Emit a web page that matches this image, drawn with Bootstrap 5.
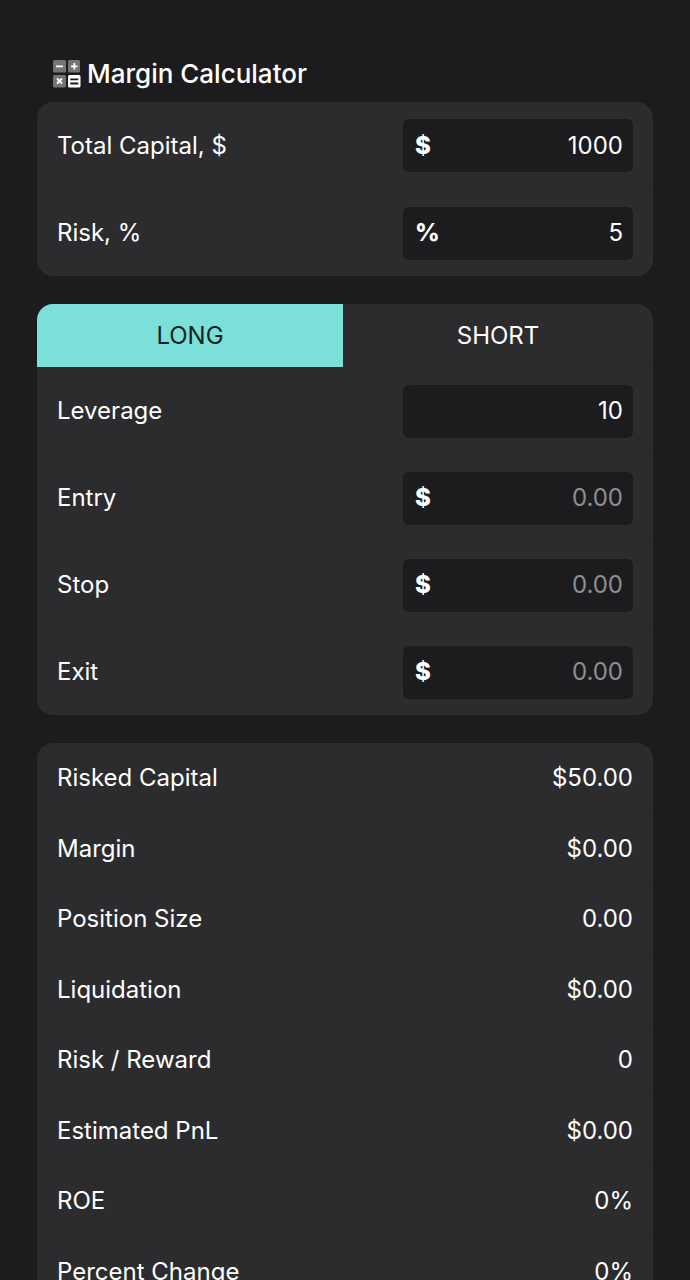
<!DOCTYPE html>
<html lang="en">
<head>
<meta charset="utf-8">
<meta name="viewport" content="width=device-width, initial-scale=1">
<title>Margin Calculator</title>
<link href="https://cdn.jsdelivr.net/npm/bootstrap@5.3.0/dist/css/bootstrap.min.css" rel="stylesheet">
<style>
  :root { --page: #1c1c1e; --panel: #2c2c2e; --line: #28282a; --accent: #7be0d9; }
  body { background: var(--page); color: #fff; font-family: Inter, "Liberation Sans", sans-serif; font-size: 24px; line-height: 32px; }
  .calc { padding: 58px 37px 37px; }
  .calc-title { font-size: 26px; line-height: 32px; font-weight: 500; margin: 0 0 12px; padding-left: 16px; gap: 6px; }
  .panel { background: var(--panel); border-radius: 16px; overflow: hidden; }
  .panel + .panel { margin-top: 28px; }
  .field-row { height: 87px; padding: 0 20px; }
  .field-row + .field-row, .tabs + .field-row { border-top: 1px solid var(--line); }
  .entry { width: 230px; height: 53px; background: var(--page); border-radius: 6px; padding: 0 10px 0 12px; }
  .entry:focus-within { outline: 1px solid var(--accent); }
  .unit { font-weight: 800; }
  .entry input { min-width: 0; background: none; border: 0; outline: 0; padding: 0; color: #fff; text-align: right; }
  .entry input::placeholder { color: #8e8e93; opacity: 1; }
  .side { height: 63px; border: 0; background: none; color: #fff; }
  .side-long { width: calc(50% - 2px); }
  .side.active { background: var(--accent); color: #0d1f20; }
  .results tr { height: 70px; }
  .results tr:nth-child(even) { height: 71px; }
  .results tr + tr { border-top: 1px solid var(--line); }
  .results th { font-weight: 400; padding: 0 0 0 20px; }
  .results td { text-align: right; padding: 0 20px 0 0; }
</style>
</head>
<body>
<main class="calc">
  <h1 class="calc-title d-flex align-items-center">
    <svg width="28" height="28" viewBox="0 0 28 28" aria-hidden="true">
      <g fill="#747474"><rect x="0" y="0" width="13" height="12.500" rx="1.500"/><rect x="15" y="0" width="12" height="12.500" rx="1.500"/><rect x="0" y="15" width="13" height="12.500" rx="1.500"/></g>
      <rect x="15" y="15" width="12.500" height="12.500" rx="1.500" fill="#fff"/>
      <g stroke="#fff" stroke-width="1.800" fill="none"><path d="M3 6.300h7M18 6.300h6.500M21.300 3v6.500M4 18.500l5 5M9 18.500l-5 5"/></g>
      <path d="M17.300 19.300h8M17.300 23.500h8" stroke="#1c1c1e" stroke-width="1.800"/>
    </svg>
    <span>Margin Calculator</span>
  </h1>

  <section class="panel">
    <div class="field-row d-flex align-items-center justify-content-between">
      <label for="capital">Total Capital, $</label>
      <div class="entry d-flex align-items-center"><span class="unit">$</span><input class="flex-fill" id="capital" type="text" inputmode="decimal" value="1000"></div>
    </div>
    <div class="field-row d-flex align-items-center justify-content-between">
      <label for="risk">Risk, %</label>
      <div class="entry d-flex align-items-center"><span class="unit">%</span><input class="flex-fill" id="risk" type="text" inputmode="decimal" value="5"></div>
    </div>
  </section>

  <section class="panel">
    <div class="tabs d-flex">
      <button class="side side-long active" type="button" aria-pressed="true">LONG</button>
      <button class="side flex-fill" type="button" aria-pressed="false">SHORT</button>
    </div>
    <div class="field-row d-flex align-items-center justify-content-between">
      <label for="leverage">Leverage</label>
      <div class="entry d-flex align-items-center"><input class="flex-fill" id="leverage" type="text" inputmode="decimal" value="10"></div>
    </div>
    <div class="field-row d-flex align-items-center justify-content-between">
      <label for="entry">Entry</label>
      <div class="entry d-flex align-items-center"><span class="unit">$</span><input class="flex-fill" id="entry" type="text" inputmode="decimal" placeholder="0.00"></div>
    </div>
    <div class="field-row d-flex align-items-center justify-content-between">
      <label for="stop">Stop</label>
      <div class="entry d-flex align-items-center"><span class="unit">$</span><input class="flex-fill" id="stop" type="text" inputmode="decimal" placeholder="0.00"></div>
    </div>
    <div class="field-row d-flex align-items-center justify-content-between">
      <label for="exit">Exit</label>
      <div class="entry d-flex align-items-center"><span class="unit">$</span><input class="flex-fill" id="exit" type="text" inputmode="decimal" placeholder="0.00"></div>
    </div>
  </section>

  <section class="panel">
    <table class="results w-100">
      <tbody>
        <tr><th scope="row">Risked Capital</th><td>$50.00</td></tr>
        <tr><th scope="row">Margin</th><td>$0.00</td></tr>
        <tr><th scope="row">Position Size</th><td>0.00</td></tr>
        <tr><th scope="row">Liquidation</th><td>$0.00</td></tr>
        <tr><th scope="row">Risk / Reward</th><td>0</td></tr>
        <tr><th scope="row">Estimated PnL</th><td>$0.00</td></tr>
        <tr><th scope="row">ROE</th><td>0%</td></tr>
        <tr><th scope="row">Percent Change</th><td>0%</td></tr>
      </tbody>
    </table>
  </section>
</main>
<script src="https://cdn.jsdelivr.net/npm/bootstrap@5.3.0/dist/js/bootstrap.bundle.min.js"></script>
</body>
</html>
